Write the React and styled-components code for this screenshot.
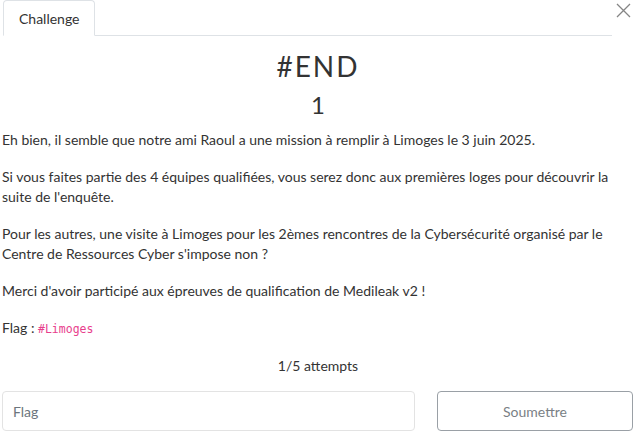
import React from "react";
import styled, { createGlobalStyle } from "styled-components";

const GlobalStyle = createGlobalStyle`
  html, body {
    margin: 0;
    padding: 0;
    background: #fff;
  }
  body {
    font-family: Lato, "Liberation Sans", sans-serif;
    color: #212529;
  }
`;

const Modal = styled.div`
  width: 636px;
  height: 432px;
  padding: 0 2px;
  box-sizing: border-box;
  display: flex;
  flex-direction: column;
`;

const Header = styled.div`
  display: flex;
  align-items: flex-start;
`;

const Tabs = styled.ul`
  display: flex;
  list-style: none;
  margin: 0 0 0 1px;
  padding: 0;
  flex: 0 0 609px;
  border-bottom: 1px solid #dee2e6;
  height: 36px;
  box-sizing: border-box;
`;

const Tab = styled.li`
  margin-bottom: -1px;
  padding: 0 14px 0 15px;
  height: 36px;
  display: flex;
  align-items: center;
  font-size: 14px;
  color: #333;
  background: #fff;
  border: 1px solid #dee2e6;
  border-bottom-color: #fff;
  border-radius: 4px 4px 0 0;
  box-sizing: border-box;
`;

const Close = styled.button`
  margin-left: auto;
  border: 0;
  background: none;
  padding: 0;
  margin-top: 3px;
  margin-right: 3px;
  width: 15px;
  height: 15px;
  color: #858585;
  cursor: pointer;
`;

const Title = styled.h1`
  margin: 14px 0 0;
  text-align: center;
  font-weight: 400;
  font-size: 28px;
  line-height: 32px;
  letter-spacing: 2px;
  color: #333;
`;

const Value = styled.h2`
  margin: 9px 0 0;
  text-align: center;
  font-weight: 400;
  font-size: 24px;
  line-height: 28px;
  color: #333;
`;

const Description = styled.div`
  margin-top: 11px;
  font-size: 14px;
  line-height: 20px;
  color: #333;
  & p {
    margin: 0 0 17px;
  }
`;

const Code = styled.code`
  font-family: "DejaVu Sans Mono", "Liberation Mono", monospace;
  font-size: 11.5px;
  color: #e83e8c;
`;

const Attempts = styled.p`
  margin: 0;
  text-align: center;
  font-size: 14px;
  line-height: 20px;
  color: #333;
`;

const SubmitRow = styled.form`
  margin-top: 15px;
  display: grid;
  grid-template-columns: 413px 196px;
  justify-content: space-between;
  padding-right: 1px;
`;

const FlagInput = styled.input`
  height: 40px;
  box-sizing: border-box;
  border: 1px solid #e3e3e3;
  border-radius: 4px;
  padding: 0 10px;
  font-family: Lato, "Liberation Sans", sans-serif;
  font-size: 14px;
  color: #333;
  outline: none;
  &::placeholder {
    color: #6c757d;
  }
`;

const SubmitButton = styled.button`
  height: 40px;
  box-sizing: border-box;
  border: 1px solid #9aa0a6;
  border-radius: 4px;
  background: #fff;
  font-family: Lato, "Liberation Sans", sans-serif;
  font-size: 14px;
  color: #7a7f85;
`;

export default function App() {
  return (
    <>
      <GlobalStyle />
      <Modal>
        <Header>
          <Tabs>
            <Tab>Challenge</Tab>
          </Tabs>
          <Close aria-label="Close">
            <svg width="15" height="15" viewBox="0 0 15 15">
              <path d="M1 1 L14 14 M14 1 L1 14" stroke="currentColor" strokeWidth="1.3" fill="none" />
            </svg>
          </Close>
        </Header>
        <Title>#END</Title>
        <Value>1</Value>
        <Description>
          <p>Eh bien, il semble que notre ami Raoul a une mission à remplir à Limoges le 3 juin 2025.</p>
          <p>Si vous faites partie des 4 équipes qualifiées, vous serez donc aux premières loges pour découvrir la suite de l'enquête.</p>
          <p>Pour les autres, une visite à Limoges pour les 2èmes rencontres de la Cybersécurité organisé par le Centre de Ressources Cyber s'impose non ?</p>
          <p>Merci d'avoir participé aux épreuves de qualification de Medileak v2 !</p>
          <p>Flag : <Code>#Limoges</Code></p>
        </Description>
        <Attempts>1/5 attempts</Attempts>
        <SubmitRow onSubmit={e => e.preventDefault()}>
          <FlagInput placeholder="Flag" />
          <SubmitButton type="submit">Soumettre</SubmitButton>
        </SubmitRow>
      </Modal>
    </>
  );
}
